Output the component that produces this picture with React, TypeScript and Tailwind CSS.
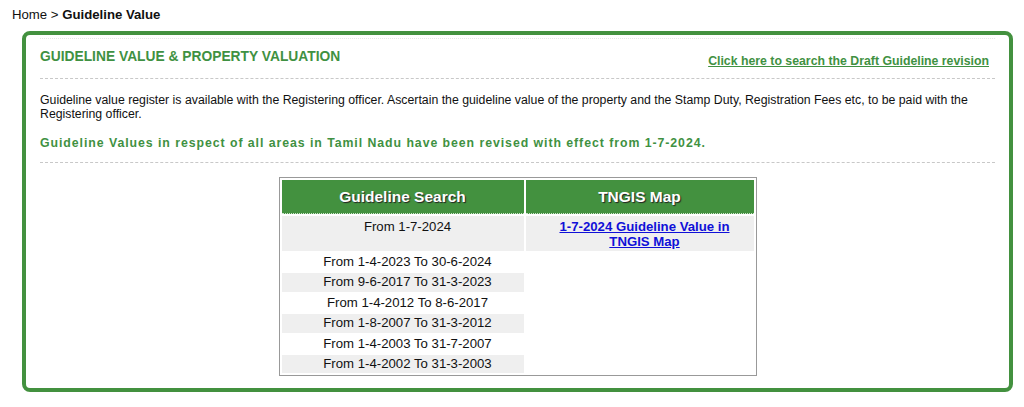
import React from "react";

const rows = [
  "From 1-4-2023 To 30-6-2024",
  "From 9-6-2017 To 31-3-2023",
  "From 1-4-2012 To 8-6-2017",
  "From 1-8-2007 To 31-3-2012",
  "From 1-4-2003 To 31-7-2007",
  "From 1-4-2002 To 31-3-2003",
];

export default function App() {
  return (
    <div className="bg-white text-black h-[407px] overflow-hidden" style={{ fontFamily: '"Liberation Sans", Arial, sans-serif' }}>
      <div className="pl-3 pt-[6px] text-[13.2px] leading-[17px] text-[#111]">
        Home &gt; <b>Guideline Value</b>
      </div>
      <div className="ml-[22px] mr-[11px] mt-[8px] h-[361px] border-4 border-[#43913f] rounded-[8px] px-[14px] pt-[3px]">
        <div className="border-t border-dotted border-[#e4e4e4]" />
        <div className="flex items-start justify-between pb-[9px] border-b border-dashed border-[#c8c8c8]">
          <div className="mt-[9px] text-[13.8px] leading-[17px] font-bold text-[#3f9142]">
            GUIDELINE VALUE &amp; PROPERTY VALUATION
          </div>
          <a className="mt-[14px] text-[12.3px] leading-[16px] font-bold text-[#3f9142] underline mr-[6px]">
            Click here to search the Draft Guideline revision
          </a>
        </div>
        <p className="mt-[14px] text-[12.3px] leading-[14px] text-[#111]">
          Guideline value register is available with the Registering officer. Ascertain the guideline value of the property and the Stamp Duty, Registration Fees etc, to be paid with the Registering officer.
        </p>
        <div className="mt-[14px] pb-[11px] text-[12.3px] leading-[16px] font-bold text-[#3f9142] tracking-[0.95px] border-b border-dashed border-[#c8c8c8]">
          Guideline Values in respect of all areas in Tamil Nadu have been revised with effect from 1-7-2024.
        </div>
        <div className="flex justify-center mt-[14px]">
          <table className="border border-[#999] border-separate border-spacing-[2px] w-[478px] text-[13.2px] text-[#111]">
            <thead>
              <tr>
                <th className="bg-[#43913f] text-white text-[15.5px] font-bold h-[34px] w-[242px] p-0 border-b border-dotted border-[#cde5cb] [text-shadow:1px_1px_1px_#222]">
                  Guideline Search
                </th>
                <th className="bg-[#43913f] text-white text-[15.5px] font-bold h-[34px] p-0 border-b border-dotted border-[#cde5cb] [text-shadow:1px_1px_1px_#222]">
                  TNGIS Map
                </th>
              </tr>
            </thead>
            <tbody>
              <tr>
                <td className="bg-[#efefef] text-center align-top pt-[3px] pl-[10px] pr-0 leading-[15px] h-[35px]">From 1-7-2024</td>
                <td className="bg-[#efefef] text-center align-top pt-[3px] pl-[10px] pr-0 leading-[15px]">
                  <a className="text-[#1010d8] underline font-bold">1-7-2024 Guideline Value in<br />TNGIS Map</a>
                </td>
              </tr>
              {rows.map((r, i) => (
                <tr key={r}>
                  <td className={`${i % 2 === 1 ? "bg-[#efefef]" : "bg-white"} text-center h-[18.4px] leading-[18.4px] py-0 pl-[10px] pr-0`}>{r}</td>
                  {i === 0 ? <td rowSpan={6} /> : null}
                </tr>
              ))}
            </tbody>
          </table>
        </div>
      </div>
    </div>
  );
}
